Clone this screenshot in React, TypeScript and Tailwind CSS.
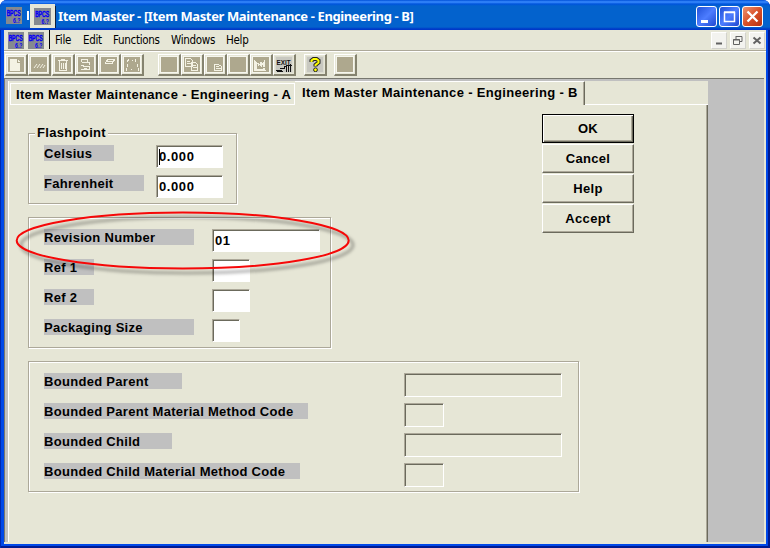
import type { ReactNode } from "react";

function BpcsIcon({ big = false }: { big?: boolean }) {
  return (
    <svg
      width={big ? 17 : 16}
      height="17"
      viewBox="0 0 16 17"
      className="shrink-0 overflow-visible bg-[#85898f]"
      fill="#0500f5"
      fontFamily="Liberation Sans"
    >
      <text x="0.700" y="8.600" fontSize="9" textLength="14" lengthAdjust="spacingAndGlyphs" stroke="#0500f5" strokeWidth=".6">
        BPCS
      </text>
      <text x="7" y="15.500" fontSize="7" textLength="7.500" fontWeight="bold" lengthAdjust="spacingAndGlyphs">
        6.?
      </text>
    </svg>
  );
}

function ToolButton({ children, plain = false }: { children?: ReactNode; plain?: boolean }) {
  return (
    <div className="h-[22px] w-[23px] shrink-0 border-t border-r-2 border-b-2 border-l border-t-white border-r-[#85836f] border-b-[#85836f] border-l-white bg-[#e6e6d6] pt-px pl-px">
      <div
        className={`h-[17px] w-[18px] border ${
          plain ? "border-[#dcdcd0] bg-[#c8c8c0]" : "border-[#f6f6ee] bg-[#aea88e]"
        }`}
      >
        <svg width="16" height="15" viewBox="1 1 16 15" fill="none" stroke="#f4f2e4" shapeRendering="crispEdges">
          {children}
        </svg>
      </div>
    </div>
  );
}

function Toolbar() {
  return (
    <div className="flex h-[26px] items-start pt-[2px] pl-px">
      <div className="flex w-[153px] gap-[0.3px]">
        <ToolButton>
          <path d="M3 3h7l3 3v9H3z" fill="#f4f2e4" stroke="none" />
          <path d="M10 3v3h3" stroke="#aea88e" />
        </ToolButton>
        <ToolButton>
          <g shapeRendering="auto">
            <path d="M4 12l3-4M7 12l3-4M10 12l3-4M13 12l2-3" />
          </g>
        </ToolButton>
        <ToolButton>
          <path d="M4 4.500h10M7 3.500h4M5.500 5v9.500h7V5M7.500 7v6M9.500 7v6M11.500 7v6" />
        </ToolButton>
        <ToolButton>
          <path d="M4.500 3v3M5 3.500h5M5 6.500h8M10.500 3v4M12.500 6v3M4 9.500h3M4 13.500h9M12.500 10v4M6 10.500h6M7 12.500h3" />
        </ToolButton>
        <ToolButton>
          <path d="M8 3.500h7M6 5.500h8M5 7.500h7M8 3l-3 5M15 3l-3 5M12 5.500h2" />
        </ToolButton>
        <ToolButton>
          <path d="M6 3l-2 3M4 8v3M3 12v3M12 3l1 3M14 8v3M15 12v3M9 4v1M8 13v1" />
        </ToolButton>
      </div>
      <div className="flex w-[146px] gap-[0.1px]">
        <ToolButton />
        <ToolButton>
          <path d="M2.500 2.500h5l2 2v6h-7zM4 5.500h3M4 7.500h5M8.500 6.500h4l2 2v6h-6zM10 9.500h3M10 11.500h4" />
        </ToolButton>
        <ToolButton>
          <path d="M8.500 8.500h4l3 2v4h-7zM10 10.500h3M10 12.500h5" />
        </ToolButton>
        <ToolButton />
        <ToolButton>
          <path d="M2.500 4v10.500h11M4 13V9l2-2 1 3 2-4 1 3 2-3v7z" fill="#f4f2e4" />
          <path d="M5 11.500h8M7.500 9v4M10.500 9v4" stroke="#aea88e" />
        </ToolButton>
        <ToolButton plain>
          <text
            x="1.500"
            y="8.500"
            fontSize="8"
            fontFamily="Liberation Sans"
            fontWeight="bold"
            fill="#111"
            stroke="none"
            textLength="14"
            lengthAdjust="spacingAndGlyphs"
          >
            EXIT
          </text>
          <g stroke="#111">
            <path d="M1 14.500h6M5 12.500h4v-2h3M11.500 9v7M11 9.500h6M13.500 10v6M15.500 8v8M2 15.500h6" />
          </g>
        </ToolButton>
      </div>
      <div className="flex w-[30px]">
        <ToolButton plain>
          <g shapeRendering="auto">
            <path d="M5.500 6V4.500L7.500 3h3l2 1.500v2L9.500 9v1.500" stroke="#222" strokeWidth="4" />
            <circle cx="9.500" cy="13.800" r="1.900" fill="#ffff00" stroke="#222" />
            <path d="M5.500 6V4.500L7.500 3h3l2 1.500v2L9.500 9v1" stroke="#ffff00" strokeWidth="2" />
          </g>
        </ToolButton>
      </div>
      <ToolButton />
    </div>
  );
}

function Caption({ children }: { children: ReactNode }) {
  return (
    <span className="text-[13px] leading-4 font-bold tracking-[0.33px] whitespace-pre text-black">
      {children}
    </span>
  );
}

interface RowProps {
  label: string;
  bar: string;
  column: string;
  field: string;
  value?: string;
  disabled?: boolean;
  caret?: boolean;
}

function Row({ label, bar, column, field, value, disabled, caret }: RowProps) {
  return (
    <div className="flex h-[30px] items-start">
      <div className={`shrink-0 ${column}`}>
        <div className={`h-4 bg-[#c0c0c0] ${bar}`}>
          <span className="block text-[13px] leading-[18px] font-bold tracking-[0.3px] whitespace-pre">{label}</span>
        </div>
      </div>
      <div
        className={`border border-t-[#aca899] border-l-[#aca899] border-r-white border-b-white ${
          disabled ? "h-6 bg-[#e6e6d6]" : "h-[23px] bg-white"
        } ${field}`}
      >
        <div className="flex h-full items-center border-t border-l border-[#6b6a5c] pb-px pl-px">
          {caret && <span className="-mr-px h-4 w-px bg-black" />}
          <span className="text-[13px] leading-4 font-bold tracking-[0.6px]">{value}</span>
        </div>
      </div>
    </div>
  );
}

function Group({ size, children }: { size: string; children: ReactNode }) {
  return (
    <div className={`border border-[#aca899] pt-[11px] pl-[15px] shadow-[1px_1px_0_#fff,inset_1px_1px_0_#fff] ${size}`}>
      {children}
    </div>
  );
}

function PushButton({ children, primary = false }: { children: ReactNode; primary?: boolean }) {
  return (
    <button
      className={`flex h-[29px] w-[92px] items-center justify-center border ${
        primary
          ? "border-black shadow-[inset_1px_1px_0_#fff,inset_-1px_-1px_0_#6b6a5c,inset_-2px_-2px_0_#aca899]"
          : "border-t-white border-l-white border-r-[#6b6a5c] border-b-[#6b6a5c] shadow-[inset_-1px_-1px_0_#aca899]"
      }`}
    >
      <Caption>{children}</Caption>
    </button>
  );
}

function WindowButton({ close = false, children }: { close?: boolean; children: ReactNode }) {
  return (
    <div
      className={`flex h-[21px] w-[21px] items-center justify-center rounded-[3px] border border-white ${
        close ? "bg-linear-to-br from-[#ee9270] via-[#d85028] to-[#b83010]" : "bg-linear-to-br from-[#2050d8] via-[#4d7dff] to-[#2148d0]"
      }`}
    >
      <svg width="19" height="19" fill="none" stroke="#fff">
        {children}
      </svg>
    </div>
  );
}

function ChildButton({ children }: { children: ReactNode }) {
  return (
    <div className="h-[17px] w-4 border border-t-white border-l-white border-r-[#d2d2cc] border-b-[#d2d2cc] bg-[#f3f3ef]">
      <svg width="14" height="15" fill="none" stroke="#626262">
        {children}
      </svg>
    </div>
  );
}

export default function App() {
  return (
    <div className="relative h-[548px] w-[770px] overflow-hidden bg-white font-['Liberation_Sans',Arial,sans-serif] text-black">
      <div className="flex h-full flex-col rounded-t-[7px] bg-[#0048e8] shadow-[inset_1px_0_0_#0028b0,inset_-2px_-2px_0_#001a90]">
        <div className="flex h-[30px] shrink-0 items-center rounded-t-[7px] bg-[linear-gradient(#0050d8_0px,#3a8cff_2px,#0054dc_4px,#0362cd_6px,#0362cd_27px,#0038c8_29px)] pr-[7px] pl-[6px]">
          <div className="mt-px flex w-[52px] items-center">
            <BpcsIcon />
            <span className="ml-[5px] h-[9px] w-[2px] bg-white" />
          </div>
          <h1 className="mt-px font-['Noto_Sans','Open_Sans',sans-serif] text-[13px] leading-4 font-bold tracking-[-0.38px] whitespace-pre text-white">
            Item Master - [Item Master Maintenance - Engineering - B]
          </h1>
          <div className="mt-[3px] ml-auto flex gap-[2px]">
            <WindowButton>
              <path d="M4 14.500h7" strokeWidth="3" />
            </WindowButton>
            <WindowButton>
              <path d="M4.500 5.500h10v9h-10zM4 5h11" strokeWidth="1.500" />
            </WindowButton>
            <WindowButton close>
              <path d="M4.500 4.500l10 10M14.500 4.500l-10 10" strokeWidth="2.300" />
            </WindowButton>
          </div>
        </div>

        <div className="mr-1 mb-1 ml-1 flex flex-1 flex-col bg-[#e6e6d6]">
          <div className="flex h-[22px] shrink-0 items-center border-b border-white pb-px pl-1 shadow-[inset_0_-1px_0_#aca899]">
            <BpcsIcon />
            <div className="ml-1 flex w-[27px]">
              <BpcsIcon />
            </div>
            <nav className="flex flex-1 font-['DejaVu_Sans_Condensed','Noto_Sans',sans-serif] text-[11.500px] leading-4 tracking-[-0.3px]">
              <span className="w-[28px]">File</span>
              <span className="w-[30px]">Edit</span>
              <span className="w-[58px]">Functions</span>
              <span className="w-[55px]">Windows</span>
              <span>Help</span>
            </nav>
            <div className="flex gap-[3px] pr-px">
              <ChildButton>
                <path d="M4 10.500h6" strokeWidth="2" />
              </ChildButton>
              <ChildButton>
                <path d="M2.500 6.500h6v5h-6zM2 7h7M5 3.500h6v5H9M5 3v3" />
              </ChildButton>
              <ChildButton>
                <path d="M3.500 4.500l7 6M10.500 4.500l-7 6" strokeWidth="2" />
              </ChildButton>
            </div>
          </div>
          <Toolbar />

          <main className="mr-[2px] mb-[2px] flex flex-1 border-t border-l border-[#77776f] bg-[#c0c0c0] pt-[2px] pl-[3px]">
            <div className="flex w-[700px] flex-col border-l border-white bg-[#e6e6d6]">
              <div className="flex h-6 shrink-0 items-end pl-px">
                <div className="flex h-[22px] w-[285px] items-center border border-white pt-px pl-[5px]">
                  <Caption>Item Master Maintenance - Engineering - A</Caption>
                </div>
                <div className="flex h-6 w-[290px] items-start border-t border-r border-t-white border-r-[#6b6a5c] pt-[3px] pl-[7px] shadow-[inset_-1px_0_0_#aca899]">
                  <Caption>Item Master Maintenance - Engineering - B</Caption>
                </div>
                <div className="flex-1 border-b border-white" />
              </div>
              <div className="flex flex-1 border-r border-[#6b6a5c] pt-[9px] pl-[19px] shadow-[inset_-1px_0_0_#aca899]">
                <div className="flex w-[514px] flex-col pt-[19px]">
                  <section className="relative">
                    <div className="absolute -top-2 left-[7px] flex bg-[#e6e6d6] px-[2px]">
                      <Caption>Flashpoint</Caption>
                    </div>
                    <Group size="w-[209px] h-[71px]">
                      <Row label="Celsius" bar="w-[70px]" column="w-[112px]" field="w-[67px]" value="0.000" caret />
                      <Row label="Fahrenheit" bar="w-[100px]" column="w-[112px]" field="w-[67px]" value="0.000" />
                    </Group>
                  </section>
                  <Group size="mt-[13px] w-[303px] h-[131px]">
                    <Row label="Revision Number" bar="w-[150px]" column="w-[168px]" field="w-[108px]" value="01" />
                    <Row label="Ref 1" bar="w-[50px]" column="w-[168px]" field="w-[38px]" />
                    <Row label="Ref 2" bar="w-[50px]" column="w-[168px]" field="w-[38px]" />
                    <Row label="Packaging Size" bar="w-[150px]" column="w-[168px]" field="w-[28px]" />
                  </Group>
                  <Group size="mt-[13px] w-[551px] h-[131px]">
                    <Row label="Bounded Parent" bar="w-[138px]" column="w-[360px]" field="w-[158px]" disabled />
                    <Row label="Bounded Parent Material Method Code" bar="w-[264px]" column="w-[360px]" field="w-[40px]" disabled />
                    <Row label="Bounded Child" bar="w-[128px]" column="w-[360px]" field="w-[158px]" disabled />
                    <Row label="Bounded Child Material Method Code" bar="w-[256px]" column="w-[360px]" field="w-[40px]" disabled />
                  </Group>
                </div>
                <div className="flex flex-col gap-px">
                  <PushButton primary>OK</PushButton>
                  <PushButton>Cancel</PushButton>
                  <PushButton>Help</PushButton>
                  <PushButton>Accept</PushButton>
                </div>
              </div>
            </div>
          </main>
        </div>
      </div>

      <div className="absolute top-[4px] left-[30px] flex h-[24px] w-[25px] items-center justify-center bg-[#e6e6d6]">
        <BpcsIcon big />
      </div>
      <div className="absolute top-[30px] left-[49px] h-[19px] w-px bg-black" />
      <div className="absolute top-[6px] left-[55px] h-[22px] w-px bg-[#10203c]" />
      <svg className="absolute top-[200px] left-0" width="370" height="90" fill="none">
        <defs>
          <filter id="soft" x="-10%" y="-20%" width="120%" height="140%">
            <feGaussianBlur stdDeviation="1.700" />
          </filter>
        </defs>
        <ellipse cx="187" cy="45" rx="166" ry="28" stroke="#000" strokeOpacity=".25" strokeWidth="3.500" filter="url(#soft)" />
        <ellipse cx="182.700" cy="40.500" rx="166" ry="28" stroke="#f60808" strokeWidth="2" />
      </svg>
    </div>
  );
}
